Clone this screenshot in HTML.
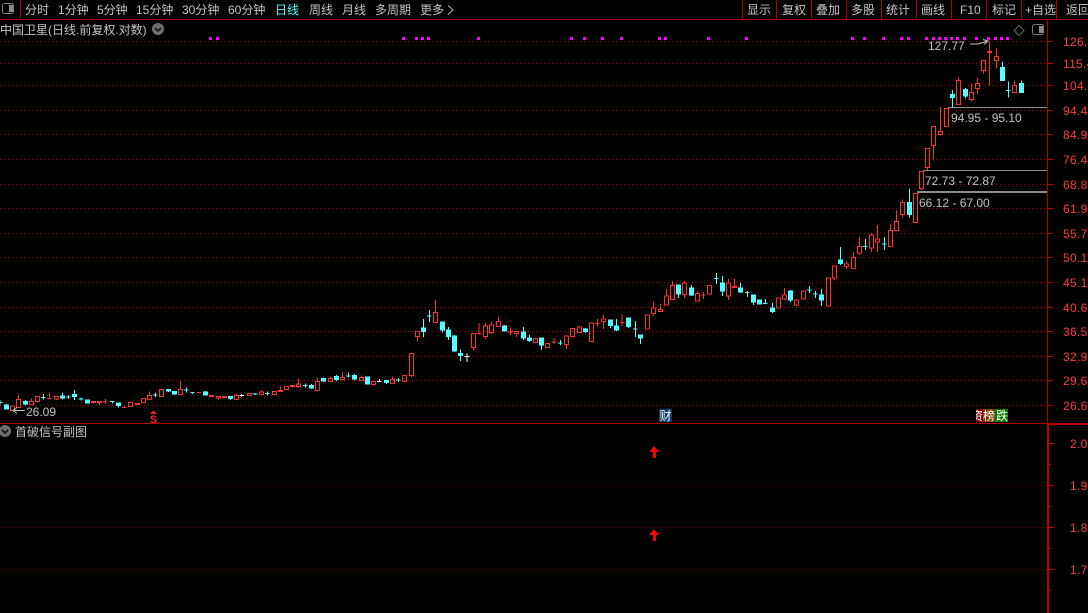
<!DOCTYPE html>
<html><head><meta charset="utf-8"><style>
html,body{margin:0;padding:0;background:#000;width:1088px;height:613px;overflow:hidden}
svg{display:block}
text{font-family:"Liberation Sans","WenQuanYi Zen Hei","Noto Sans CJK SC",sans-serif;font-size:12px;fill:#c4c4c4}
.m text{fill:#c4c4c4}
.a text{fill:#ff3c3c;letter-spacing:.3px}
.r{fill:none;stroke:#ff3232;stroke-width:3}
.c{fill:#54ffff;stroke:#54ffff;stroke-width:3}
.w{fill:none;stroke:#fff;stroke-width:3}
</style></head><body>
<svg width="1088" height="613" viewBox="0 0 1088 613" xmlns="http://www.w3.org/2000/svg">
<rect width="1088" height="613" fill="#000"/>
<g shape-rendering="crispEdges">
<path d="M0 19.5H1088M20.5 0V19M742.5 0V19M776.5 0V19M811.5 0V19M846.5 0V19M881.5 0V19M916.5 0V19M951.5 0V19M986.5 0V19M1021.5 0V19M1056.5 0V19M0 423.5H1047M1047.5 19V424" stroke="#b00000" fill="none"/>
<rect x="1047" y="423" width="41" height="2" fill="#c00000"/>
<rect x="1047" y="423" width="2" height="190" fill="#c00000"/>
<path d="M0 41.5H1047M0 63.5H1047M0 85.5H1047M0 110.5H1047M0 134.5H1047M0 159.5H1047M0 184.5H1047M0 208.5H1047M0 233.5H1047M0 257.5H1047M0 282.5H1047M0 307.5H1047M0 331.5H1047M0 356.5H1047M0 380.5H1047M0 405.5H1047" stroke="#a80000" stroke-dasharray="1 3" fill="none"/>
<path d="M2 485.5H1047M2 527.5H1047M2 569.5H1047" stroke="#8c0000" stroke-dasharray="1 3" fill="none"/>
<path d="M1048 41.5h5M1048 63.5h5M1048 85.5h5M1048 110.5h5M1048 134.5h5M1048 159.5h5M1048 184.5h5M1048 208.5h5M1048 233.5h5M1048 257.5h5M1048 282.5h5M1048 307.5h5M1048 331.5h5M1048 356.5h5M1048 380.5h5M1048 405.5h5M1049 443.5h5M1049 464.5h2M1049 485.5h5M1049 506.5h2M1049 527.5h5M1049 548.5h2M1049 569.5h5M1049 590.5h2" stroke="#c00000" fill="none"/>
<!-- magenta marks -->
<path d="M209 37h3v3h-3zM216 37h3v3h-3zM402 37h3v3h-3zM415 37h3v3h-3zM421 37h3v3h-3zM427 37h3v3h-3zM477 37h3v3h-3zM570 37h3v3h-3zM583 37h3v3h-3zM601 37h3v3h-3zM620 37h3v3h-3zM658 37h3v3h-3zM664 37h3v3h-3zM707 37h3v3h-3zM745 37h3v3h-3zM851 37h3v3h-3zM863 37h3v3h-3zM882 37h3v3h-3zM900 37h3v3h-3zM907 37h3v3h-3zM925 37h3v3h-3zM932 37h3v3h-3zM938 37h3v3h-3zM944 37h3v3h-3zM950 37h3v3h-3zM956 37h3v3h-3zM963 37h3v3h-3zM975 37h3v3h-3zM987 37h3v3h-3zM994 37h3v3h-3zM1000 37h3v3h-3zM1006 37h3v3h-3z" fill="#ff00ff"/>
<!-- price boxes -->
<path d="M948 107.5H1047M923 170.5H1047" stroke="#8c8c8c" fill="none"/>
<rect x="917" y="191" width="130" height="2" fill="#8c8c8c"/>
<g transform="translate(0,370) scale(.33333)">
<path class="r" d="M31 108h12v14h-12zM55 75V88M49 88h12v24h-12zM94 85V94M88 94h12v10h-12zM106 79h12v16h-12zM148 67V87M141 85h14M163 79h12v8h-12zM169 87V90M274 94h12v4h-12zM280 98V101M292 94h12v4h-12zM298 98V105M316 87V102M309 94h14M373 108V114M366 112h14M385 97h12v13h-12zM406 100h12v4h-12zM424 85h12v13h-12zM448 64V76M442 76h12v13h-12zM478 58h12v22h-12zM541 34V58M535 58h12v16h-12zM591 67h12M628 76h12v4h-12zM649 79h12v5h-12zM655 84V90M667 79h12v4h-12zM703 76h12v12h-12zM709 72V76"/>
<path class="c" d="M0 90V106M-7 98h14M13 105h12v12h-12zM19 102V118M70 94h12v8h-12zM76 90V106M130 72V88M123 82h14M181 78h12v6h-12zM187 67V88M205 75V87M198 81h14M218 74h12v6h-12zM224 60V90M243 82V92M236 87h14M256 90h12v9h-12zM337 94V100M330 95h14M349 99h12v8h-12zM355 107V113M466 67V81M459 75h14M499 58h12v5h-12zM505 63V66M517 64h12v8h-12zM523 72V75M559 52V68M552 60h14M572 67h12M578 67V72M610 66h12v9h-12zM616 63V77M685 79h12v7h-12zM691 86V90"/>
</g>
<g transform="translate(240,360) scale(.33333)">
<path class="r" d="M22 100h12v6h-12zM58 96h12v8h-12zM64 90V96M97 94h12v10h-12zM115 91h12v4h-12zM121 79V91M133 79h12v10h-12zM151 76h12v4h-12zM157 80V83M169 72h12v8h-12zM175 55V72M175 80V83M226 64h12v28h-12zM232 52V64M265 56h12v9h-12zM271 50V56M301 52h12v7h-12zM307 37V52M307 59V62M358 52h12v10h-12zM364 46V52M394 64h12v10h-12zM451 58h12v13h-12zM457 49V58M487 46h12v19h-12z"/>
<path class="c" d="M45 99V105M38 102h14M82 94V107M75 100h14M196 70V82M189 76h14M208 77h12v7h-12zM214 72V87M244 56h12v7h-12zM250 52V66M283 49h12v9h-12zM289 45V63M325 37V53M318 48h14M337 46h12v11h-12zM343 42V62M376 51h12v21h-12zM382 49V74M433 62h12v6h-12zM439 60V72M475 54V66M468 60h14"/>
<path class="w" d="M5 102V110M-2 106h14M418 57V66M411 64h14"/>
</g>
<g transform="translate(400,290) scale(.33333)">
<path class="r" d="M28 190h12v67h-12zM34 257V263M46 125h12v15h-12zM52 140V155M100 67h12v31h-12zM106 30V67M214 130h12v43h-12zM220 173V182M237 99V135M230 130h14M250 108h12v32h-12zM256 99V108M256 140V147M268 105h12v23h-12zM274 94V105M274 128V132M289 94h12v16h-12zM295 81V94M331 114V137M324 124h14v2h-14zM343 124h12v7h-12zM349 131V141M400 145h12v13h-12zM436 160h12v13h-12zM462 144V162M455 156h14M493 138h12v26h-12zM499 135V138M499 164V177M511 115h12v25h-12zM532 111h12v17h-12zM538 108V111M568 99h12v56h-12zM592 87V111M585 100h14M604 87h12v8h-12zM610 75V87M610 95V117M666 72V108M659 97h14"/>
<path class="c" d="M64 114h12v11h-12zM70 87V141M88 60V96M81 78h14M121 96h12v24h-12zM127 120V128M139 120h12v20h-12zM145 111V150M157 138h12v45h-12zM163 135V186M175 190h12v7h-12zM181 178V213M307 108h12v15h-12zM313 105V125M364 126h12v18h-12zM370 111V150M382 144h12v8h-12zM388 135V156M418 144h12v21h-12zM424 165V180M481 150V165M474 159h14M550 117h12v8h-12zM556 114V129M625 90h12v17h-12zM631 107V114M643 108h12v12h-12zM649 87V123M679 84h12v26h-12zM685 82V114M706 93V141M699 117h14M716 135h12v9h-12zM722 144V162"/>
<path class="w" d="M201 190V216M194 200h14"/>
</g>
<g transform="translate(640,240) scale(.33333)">
<path class="r" d="M16 225h12v42h-12zM34 204h12v17h-12zM40 186V204M40 221V228M55 208h12v7h-12zM61 192V208M73 168h12v27h-12zM79 147V168M91 136h12v43h-12zM97 123V136M127 129h12v35h-12zM133 123V129M133 164V174M166 160h12v23h-12zM172 153V160M190 156V177M183 165h14M202 136h12v26h-12zM259 129h12v39h-12zM265 117V129M265 168V180M277 139h12v4h-12zM283 117V139M409 174h12v30h-12zM427 165h12v12h-12zM433 144V165M433 177V180M463 180h12v15h-12zM469 177V180M469 195V198M484 153h12v24h-12zM559 114h12v84h-12zM577 78h12v36h-12zM583 114V120M613 72h12v8h-12zM619 63V72M619 80V87M634 52h12v34h-12zM640 36V52M652 19h12v20h-12zM658 -9V19M658 39V45M688 -15h12v39h-12zM694 -21V-15M694 24V36M706 -3h12v9h-12zM712 -45V-3M712 6V36"/>
<path class="c" d="M109 135h12v27h-12zM115 162V174M148 144h12v21h-12zM154 135V168M229 99V132M222 116h14M241 129h12v24h-12zM247 108V168M295 144h12v12h-12zM301 129V159M322 153V171M315 158h14M334 165h12v21h-12zM340 186V195M352 180h12v12h-12zM376 177V192M369 190h14M391 204h12v10h-12zM397 189V219M445 153h12v27h-12zM451 150V186M508 138V159M501 150h14M526 153V174M519 162h14M538 165h12v15h-12zM544 147V198M595 60h12v10h-12zM601 21V75M676 -3V30M669 20h14"/>
</g>
<g transform="translate(880,100) scale(.33333)">
<path class="r" d="M25 391h12v49h-12zM31 372V391M43 364h12v27h-12zM49 331V364M61 307h12v36h-12zM67 298V307M67 343V352M100 280h12v87h-12zM118 214h12v51h-12zM124 265V270M136 145h12v58h-12zM142 203V210M154 79h12v57h-12zM160 136V178M175 94h12v10h-12zM181 21V94M181 104V106M193 25h12v54h-12z"/>
<path class="c" d="M13 411V450M6 432h14M82 307h12v37h-12zM88 265V353"/>
</g>
<g transform="translate(730,0) scale(.33333)">
<path class="r" d="M679 241h12v72h-12zM685 232V241M718 277h12v22h-12zM724 250V277M724 299V304M736 250h12v15h-12zM742 232V250M742 265V282M754 181h12v31h-12zM760 212V220M772 154h12v3h-12zM778 124V256M793 169h12v12h-12zM799 145V169M799 181V206M847 256h12v21h-12zM853 241V256"/>
<path class="c" d="M661 283h12v10h-12zM667 270V322M700 268h12v20h-12zM706 264V296M811 202h12v40h-12zM817 184V202M835 244V292M828 272h14M868 250h12v27h-12zM874 241V250"/>
</g>
<!-- red arrows -->
<path d="M654 446L659 452H656V458H653V452H649Z" fill="#ff0000"/>
<path d="M654 529L659 535H656V541H653V535H649Z" fill="#ff0000"/>
<!-- event badges -->
<rect x="659" y="409" width="13" height="13" fill="#0a3a66"/>
<rect x="976" y="409" width="7" height="13" fill="#8a0000"/>
<rect x="983" y="409" width="12" height="13" fill="#7a3c00"/>
<rect x="995" y="409" width="13" height="13" fill="#007a00"/>
</g>
<!-- top icons -->
<g fill="none" stroke="#7a7a7a">
<rect x="2.5" y="3.5" width="11" height="10" rx="2"/>
<rect x="1032.5" y="24.5" width="11" height="10" rx="2"/>
</g>
<rect x="9" y="5" width="4" height="7" fill="#8a8a8a"/>
<rect x="1039" y="26" width="4" height="7" fill="#8a8a8a"/>
<path d="M1019 25.5L1024 30.5L1019 35.5L1014 30.5Z" fill="none" stroke="#666"/>
<circle cx="158" cy="29" r="6" fill="#6e6e6e"/>
<path d="M155 28L158 31L161 28" fill="none" stroke="#111" stroke-width="1.6"/>
<circle cx="5" cy="431" r="6" fill="#6e6e6e"/>
<path d="M2 430L5 433L8 430" fill="none" stroke="#111" stroke-width="1.6"/>
<path d="M448 5.500L453 10L448 14.500" fill="none" stroke="#bbb"/>
<!-- menu -->
<g class="m">
<text x="25" y="14">分时</text>
<text x="58" y="14">1分钟</text>
<text x="97" y="14">5分钟</text>
<text x="136" y="14">15分钟</text>
<text x="182" y="14">30分钟</text>
<text x="228" y="14">60分钟</text>
<text x="275" y="14" style="fill:#54ffff">日线</text>
<text x="309" y="14">周线</text>
<text x="342" y="14">月线</text>
<text x="375" y="14">多周期</text>
<text x="420" y="14">更多</text>
<text x="747" y="14">显示</text>
<text x="782" y="14">复权</text>
<text x="816" y="14">叠加</text>
<text x="851" y="14">多股</text>
<text x="886" y="14">统计</text>
<text x="921" y="14">画线</text>
<text x="960" y="14">F10</text>
<text x="992" y="14">标记</text>
<text x="1025" y="14">+自选</text>
<text x="1066" y="14">返回</text>
<text x="0" y="34">中国卫星(日线.前复权.对数)</text>
<text x="15" y="436">首破信号副图</text>
<text x="928" y="50">127.77</text>
<text x="951" y="122">94.95 - 95.10</text>
<text x="925" y="185">72.73 - 72.87</text>
<text x="919" y="207">66.12 - 67.00</text>
<text x="26" y="416">26.09</text>
</g>
<path d="M970 44H978L988 41M983 39.500L988 41L984 44.500M25 410.500H13M17 407.500L13 410.500L17 413.500" fill="none" stroke="#c4c4c4"/>
<!-- axis labels -->
<g class="a">
<text x="1063" y="46">126.50</text>
<text x="1063" y="68">115.40</text>
<text x="1063" y="90">104.50</text>
<text x="1063" y="115">94.40</text>
<text x="1063" y="139">84.90</text>
<text x="1063" y="164">76.40</text>
<text x="1063" y="189">68.83</text>
<text x="1063" y="213">61.94</text>
<text x="1063" y="238">55.74</text>
<text x="1063" y="262">50.17</text>
<text x="1063" y="287">45.14</text>
<text x="1063" y="312">40.63</text>
<text x="1063" y="336">36.57</text>
<text x="1063" y="361">32.91</text>
<text x="1063" y="385">29.62</text>
<text x="1063" y="410">26.66</text>
<text x="1070" y="448">2.00</text>
<text x="1070" y="490">1.90</text>
<text x="1070" y="532">1.80</text>
<text x="1070" y="574">1.70</text>
</g>
<!-- marker S + badge text -->
<path d="M153.500 410.500L157 414H150Z" fill="#ff2020"/>
<text x="153.500" y="423" text-anchor="middle" style="font-size:11px;font-weight:bold;fill:#ff2020">S</text>
<text x="659.500" y="420" style="font-size:12px;fill:#fff">财</text>
<svg x="976" y="409" width="7" height="13" viewBox="0 0 7 13"><text x="-5" y="11" style="font-size:12px;fill:#fff">资</text></svg>
<text x="983" y="420" style="font-size:12px;fill:#fff">榜</text>
<text x="996" y="420" style="font-size:12px;fill:#fff">跌</text>
</svg>
</body></html>
